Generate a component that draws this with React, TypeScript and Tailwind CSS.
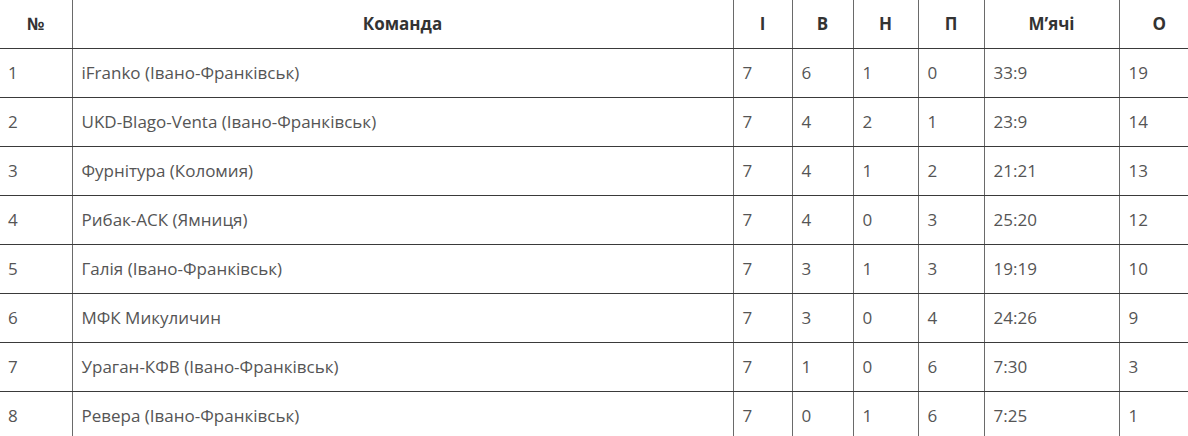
const rows = [
  ["1", "iFranko (Івано-Франківськ)", "7", "6", "1", "0", "33:9", "19"],
  ["2", "UKD-Blago-Venta (Івано-Франківськ)", "7", "4", "2", "1", "23:9", "14"],
  ["3", "Фурнітура (Коломия)", "7", "4", "1", "2", "21:21", "13"],
  ["4", "Рибак-АСК (Ямниця)", "7", "4", "0", "3", "25:20", "12"],
  ["5", "Галія (Івано-Франківськ)", "7", "3", "1", "3", "19:19", "10"],
  ["6", "МФК Микуличин", "7", "3", "0", "4", "24:26", "9"],
  ["7", "Ураган-КФВ (Івано-Франківськ)", "7", "1", "0", "6", "7:30", "3"],
  ["8", "Ревера (Івано-Франківськ)", "7", "0", "1", "6", "7:25", "1"],
];

const headers = ["№", "Команда", "І", "В", "Н", "П", "М’ячі", "О"];
// last column runs past the window edge, as in the screenshot
const widths = ["w-[72px]", "w-[661px]", "w-[59px]", "w-[61px]", "w-[65px]", "w-[66px]", "w-[135px]", "w-[80px]"];

export default function App() {
  return (
    <div className="w-[1188px] h-[436px] overflow-hidden bg-white font-['Open_Sans',sans-serif]">
      <table className="w-[1199px] table-fixed border-collapse">
        <colgroup>
          {widths.map((w, i) => (
            <col key={i} className={w} />
          ))}
        </colgroup>
        <thead>
          <tr className="h-[48px]">
            {headers.map((h, i) => (
              <th
                key={h}
                className={`text-center text-[17px] font-bold text-[#333] border-b border-[#3a3a3a] ${
                  i > 0 ? "border-l border-l-[#6a6a6a]" : ""
                }`}
              >
                {h}
              </th>
            ))}
          </tr>
        </thead>
        <tbody>
          {rows.map((r) => (
            <tr key={r[0]} className="h-[49px]">
              {r.map((c, i) => (
                <td
                  key={i}
                  className={`px-[8px] text-left text-[17px] text-[#555] border-b border-[#3a3a3a] ${
                    i > 0 ? "border-l border-l-[#6a6a6a] pl-[9px]" : ""
                  }`}
                >
                  {c}
                </td>
              ))}
            </tr>
          ))}
        </tbody>
      </table>
    </div>
  );
}
